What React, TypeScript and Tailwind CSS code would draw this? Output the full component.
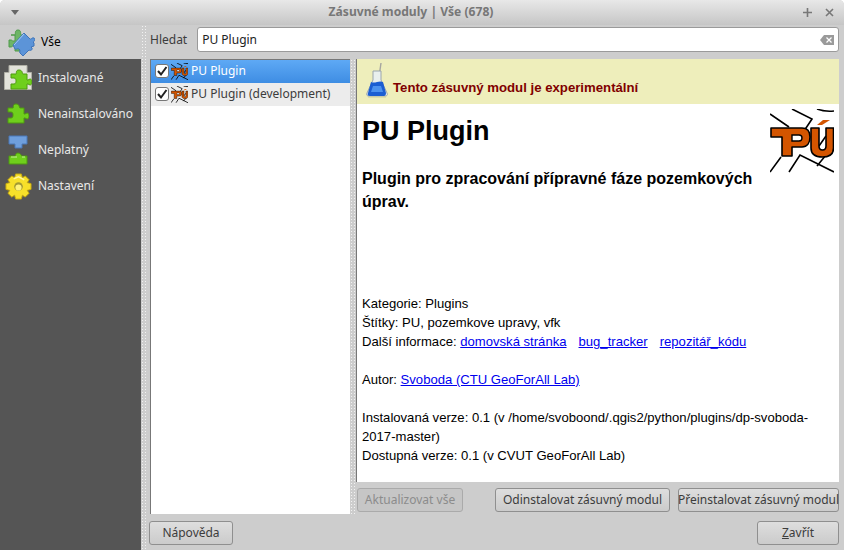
import * as React from 'react'

function AllIcon() {
  return (
    <svg viewBox="0 0 28 27" className="w-[28px] h-[27px]">
      <path d="M4 6h4c1 0-1-5 3-5s2 5 3 5h2v16H8v-5H6c-1 0 0 1-3 1H2v-7h1c3 0 2 1 3 1h2V6z" fill="#6eb566" stroke="#4e9a4a" />
      <path
        d="M6 16L17 4l6 6c1 1 2-2 4-1s0 4-1 4l1 1 0 3-3 1 1 1c1 2-2 3-3 2l-6 6-3-3c-1-1 1-3-1-4s-3 1-4 0z"
        fill="#5c94d8"
        stroke="#3f74b8"
      />
      <path d="M7 16L17 5" stroke="#a9cdf3" strokeWidth="1" />
    </svg>
  )
}

function GreenPiece() {
  return (
    <path
      d="M1 5h5c1 0-1-4 3-4s3 4 4 4h4v6h1c1 0 1-1 2-1s2 1 2 3-1 3-2 3-1-1-2-1h-1v5H1v-5h3c2 0 2-2 2-3s0-3-2-3H1z"
      fill="#6fcf1c"
      stroke="#4f9a10"
    />
  )
}

function InstalledIcon() {
  return (
    <svg viewBox="0 0 28 27" className="w-[28px] h-[27px]">
      <path d="M5 0.5h18v7h4.5v17h-27v-17H5z" fill="#e2e2da" stroke="#b0b0a6" />
      <g transform="translate(6 4)">
        <GreenPiece />
      </g>
    </svg>
  )
}

function NotInstalledIcon() {
  return (
    <svg viewBox="0 0 22 22" className="w-[22px] h-[22px]">
      <GreenPiece />
    </svg>
  )
}

function InvalidIcon() {
  return (
    <svg viewBox="0 0 20 30" className="w-[20px] h-[30px]">
      <path d="M1 1h18v8h-5v4H7V9H1z" fill="#6f9fdc" stroke="#4a78b8" />
      <path d="M1 29V21h6c1 0 0-3 3-3s3 3 4 3h5v8z" fill="#6fcf1c" stroke="#4f9a10" />
      <path d="M3 22h6M14 22h3" stroke="#c8f09a" strokeWidth="1" />
    </svg>
  )
}

function GearIcon() {
  return (
    <svg viewBox="0 0 28 28" className="w-[27px] h-[27px]">
      <path
        d="M11 1h6l1 4 3-2 4 4-2 3 4 1v6l-4 1 2 3-4 4-3-2-1 4h-6l-1-4-3 2-4-4 2-3-4-1v-6l4-1-2-3 4-4 3 2z"
        fill="#f7e02a"
        stroke="#c4a810"
        strokeWidth="1"
        strokeLinejoin="round"
      />
      <path d="M9 6l5-2 6 3" stroke="#fff59a" strokeWidth="1.5" fill="none" />
      <circle cx="14" cy="14" r="4.5" fill="#a39a34" />
      <circle cx="14" cy="15" r="3.2" fill="#fff27a" />
    </svg>
  )
}

function PuMark({ size }: { size: 'sm' | 'lg' }) {
  return (
    <svg viewBox="0 0 64 64" className={size === 'lg' ? 'w-[64px] h-[64px]' : 'w-[17px] h-[17px]'}>
      <g stroke="#000" strokeWidth={size === 'lg' ? 1.6 : 3} fill="none">
        <path d="M0 5l19 13M22 0l20 10-12 18M47 0q8 3 17 2M0 63l11-15M19 63l11-17 34 17M47 57l9-11M49 37l7-10" />
      </g>
      <path
        d="M1 19h31c5 0 8 3 8 9s-3 10-8 10H22v9H12V28H1z"
        fill="#d45500"
        stroke="#000"
        strokeWidth="1.6"
        strokeLinejoin="round"
      />
      <path d="M22 26h7c2 0 3 1 3 3s-1 3-3 3h-7z" fill="#fff" stroke="#000" strokeWidth="1.4" />
      <path
        d="M41 19h8v18c0 3 1 4 3.5 4s3.5-1 3.5-4V19h7.5v20c0 6-4 9-11 9s-11.5-3-11.5-9z"
        fill="#d45500"
        stroke="#000"
        strokeWidth="1.6"
        strokeLinejoin="round"
      />
      <path d="M47 16l6-5h7l-8 5z" fill="#d45500" />
    </svg>
  )
}

function Flask() {
  return (
    <svg viewBox="0 0 22 35" className="w-[22px] h-[35px]">
      <path d="M15 0l-2 14" stroke="#a5a5a0" strokeWidth="1.4" />
      <path d="M7 8h8v9l6 13c1 2 0 3-2 3H3c-2 0-3-1-2-3l6-13z" fill="#e9efee" stroke="#9aa5ad" strokeWidth="1" />
      <path d="M5 19c4 2 8-2 12 0l3 11c0 2-1 3-2 3H4c-2 0-3-1-2-3z" fill="#1b5ed2" />
      <path d="M7 23h8l2 6H5z" fill="#4c92ee" />
      <path d="M2 34h18" stroke="#c9c9a0" strokeWidth="1" />
    </svg>
  )
}

function CheckBox() {
  return (
    <span className="w-[14px] h-[14px] rounded-[3px] border border-[#777] bg-white flex items-center justify-center shrink-0">
      <svg viewBox="0 0 12 12" className="w-[12px] h-[12px]">
        <path d="M2 6l3 3.5L10.5 2" stroke="#222" strokeWidth="2" fill="none" />
      </svg>
    </span>
  )
}

function Btn({ children, className, disabled }: { children: React.ReactNode; className: string; disabled?: boolean }) {
  return (
    <button
      className={`h-[24px] rounded-[3px] border text-[12px] flex items-center justify-center whitespace-nowrap ${
        disabled
          ? 'border-[#aaa] bg-[#c6c6c6] text-[#8c8c8c]'
          : 'border-[#8f8f8f] bg-gradient-to-b from-[#dedede] to-[#cbcbcb] text-[#3c3c3c]'
      } ${className}`}
    >
      {children}
    </button>
  )
}

function Splitter() {
  return (
    <div className="w-[6px] shrink-0 bg-[radial-gradient(#f2f2f2_1px,transparent_1px)] bg-[length:3px_3px]" />
  )
}

const navItems = [
  { label: 'Instalované', icon: <InstalledIcon /> },
  { label: 'Nenainstalováno', icon: <NotInstalledIcon /> },
  { label: 'Neplatný', icon: <InvalidIcon /> },
  { label: 'Nastavení', icon: <GearIcon /> },
]

export default function App() {
  return (
    <div className="w-[844px] h-[550px] flex flex-col overflow-hidden bg-[#cdcdcd] font-['Noto_Sans',sans-serif] text-[12px] text-[#3c3c3c] rounded-t-[5px]">
      <div className="h-[25px] shrink-0 flex items-center pl-[11px] pr-[10px] bg-gradient-to-b from-[#e8e8e8] to-[#c6c6c6]">
        <svg viewBox="0 0 8 5" className="w-[8px] h-[5px]">
          <path d="M0 0h8L4 5z" fill="#666" />
        </svg>
        <div className="flex-1 text-center font-bold text-[#777] text-[12.1px]">Zásuvné moduly | Vše (678)</div>
        <div className="flex items-center gap-[13px]">
          <svg viewBox="0 0 9 9" className="w-[9px] h-[9px]">
            <path d="M4.5 0v9M0 4.5h9" stroke="#777" strokeWidth="1.6" />
          </svg>
          <svg viewBox="0 0 9 9" className="w-[9px] h-[9px]">
            <path d="M1 1l7 7M8 1l-7 7" stroke="#777" strokeWidth="1.6" />
          </svg>
        </div>
      </div>

      <div className="flex-1 flex min-h-0">
        <div className="w-[141px] shrink-0 flex flex-col">
          <div className="h-[34px] flex items-center pl-[7px] gap-[6px] text-black">
            <AllIcon />
            <span>Vše</span>
          </div>
          <div className="flex-1 bg-[#555555] text-[#e8e8e8] pt-[1px]">
            {navItems.map((item) => (
              <div key={item.label} className="h-[36px] flex items-center">
                <div className="w-[38px] flex justify-center shrink-0 pr-[2px]">{item.icon}</div>
                <span>{item.label}</span>
              </div>
            ))}
          </div>
        </div>
        <Splitter />

        <div className="flex-1 flex flex-col min-w-0 pl-[3px] pr-[5px]">
          <div className="h-[34px] shrink-0 flex items-center gap-[10px] pb-[5px]">
            <span>Hledat</span>
            <div className="flex-1 h-[25px] bg-white border border-[#9a9a9a] rounded-[3px] flex items-center pl-[4px] pr-[4px] text-[#222]">
              <span className="flex-1">PU Plugin</span>
              <svg viewBox="0 0 14 10" className="w-[14px] h-[10px]">
                <path d="M4 0h10v10H4L0 5z" fill="#9a9a9a" />
                <path d="M6.5 2.5l5 5M11.5 2.5l-5 5" stroke="#fff" strokeWidth="1.2" />
              </svg>
            </div>
          </div>

          <div className="flex-1 flex min-h-0">
            <div className="w-[200px] shrink-0 bg-white border-l border-t border-[#777] flex flex-col">
              <div className="h-[23px] flex items-center pl-[4px] pb-[1px] gap-[2px] bg-gradient-to-b from-[#5ea9f5] to-[#3e8de3] text-white">
                <CheckBox />
                <PuMark size="sm" />
                <span className="ml-[1px]">PU Plugin</span>
              </div>
              <div className="h-[23px] flex items-center pl-[4px] pb-[1px] gap-[2px] bg-[#ececec] text-[#3c3c3c]">
                <CheckBox />
                <PuMark size="sm" />
                <span className="ml-[1px]">PU Plugin (development)</span>
              </div>
            </div>
            <Splitter />

            <div className="flex-1 min-w-0 flex flex-col">
              <div className="h-[423px] shrink-0 bg-white border-l border-[#777] flex flex-col font-['Liberation_Sans',sans-serif] text-black">
                <div className="h-[45px] shrink-0 bg-[#eeeebb] flex items-end pl-[9px] pb-[6px] gap-[5px]">
                  <Flask />
                  <span className="font-bold text-[#800000] text-[13.2px]">Tento zásuvný modul je experimentální</span>
                </div>
                <div className="flex pl-[5px] pr-[5px]">
                  <div className="flex-1 min-w-0 pr-[15px]">
                    <h1 className="text-[27px] leading-[30px] font-bold mt-[12px]">PU Plugin</h1>
                    <h3 className="text-[16px] leading-[23px] font-bold mt-[21px]">
                      Plugin pro zpracování přípravné fáze pozemkových úprav.
                    </h3>
                  </div>
                  <div className="pt-[5px] shrink-0">
                    <PuMark size="lg" />
                  </div>
                </div>
                <div className="pl-[5px] pr-[20px] text-[13.1px] leading-[19px] mt-[81px]">
                  <p>Kategorie: Plugins</p>
                  <p>Štítky: PU, pozemkove upravy, vfk</p>
                  <p>
                    Další informace: <a className="text-[#0000ee] underline">domovská stránka</a>
                    <a className="text-[#0000ee] underline ml-[12px]">bug_tracker</a>
                    <a className="text-[#0000ee] underline ml-[12px]">repozitář_kódu</a>
                  </p>
                  <p className="mt-[19px]">
                    Autor: <a className="text-[#0000ee] underline">Svoboda (CTU GeoForAll Lab)</a>
                  </p>
                  <p className="mt-[19px]">
                    Instalovaná verze: 0.1 (v /home/svoboond/.qgis2/python/plugins/dp-svoboda-2017-master)
                  </p>
                  <p>Dostupná verze: 0.1 (v CVUT GeoForAll Lab)</p>
                </div>
              </div>
              <div className="flex items-center mt-[6px]">
                <Btn disabled className="w-[106px] ml-[1px]">Aktualizovat vše</Btn>
                <Btn className="w-[175px] ml-[32px]">Odinstalovat zásuvný modul</Btn>
                <Btn className="w-[161px] ml-[8px]">Přeinstalovat zásuvný modul</Btn>
              </div>
            </div>
          </div>

          <div className="h-[36px] shrink-0 flex items-center justify-between pt-[7px] pb-[5px]">
            <Btn className="w-[84px] -ml-[1px]">Nápověda</Btn>
            <Btn className="w-[82px]">
              <span>
                <span className="underline">Z</span>avřít
              </span>
            </Btn>
          </div>
        </div>
      </div>
    </div>
  )
}
